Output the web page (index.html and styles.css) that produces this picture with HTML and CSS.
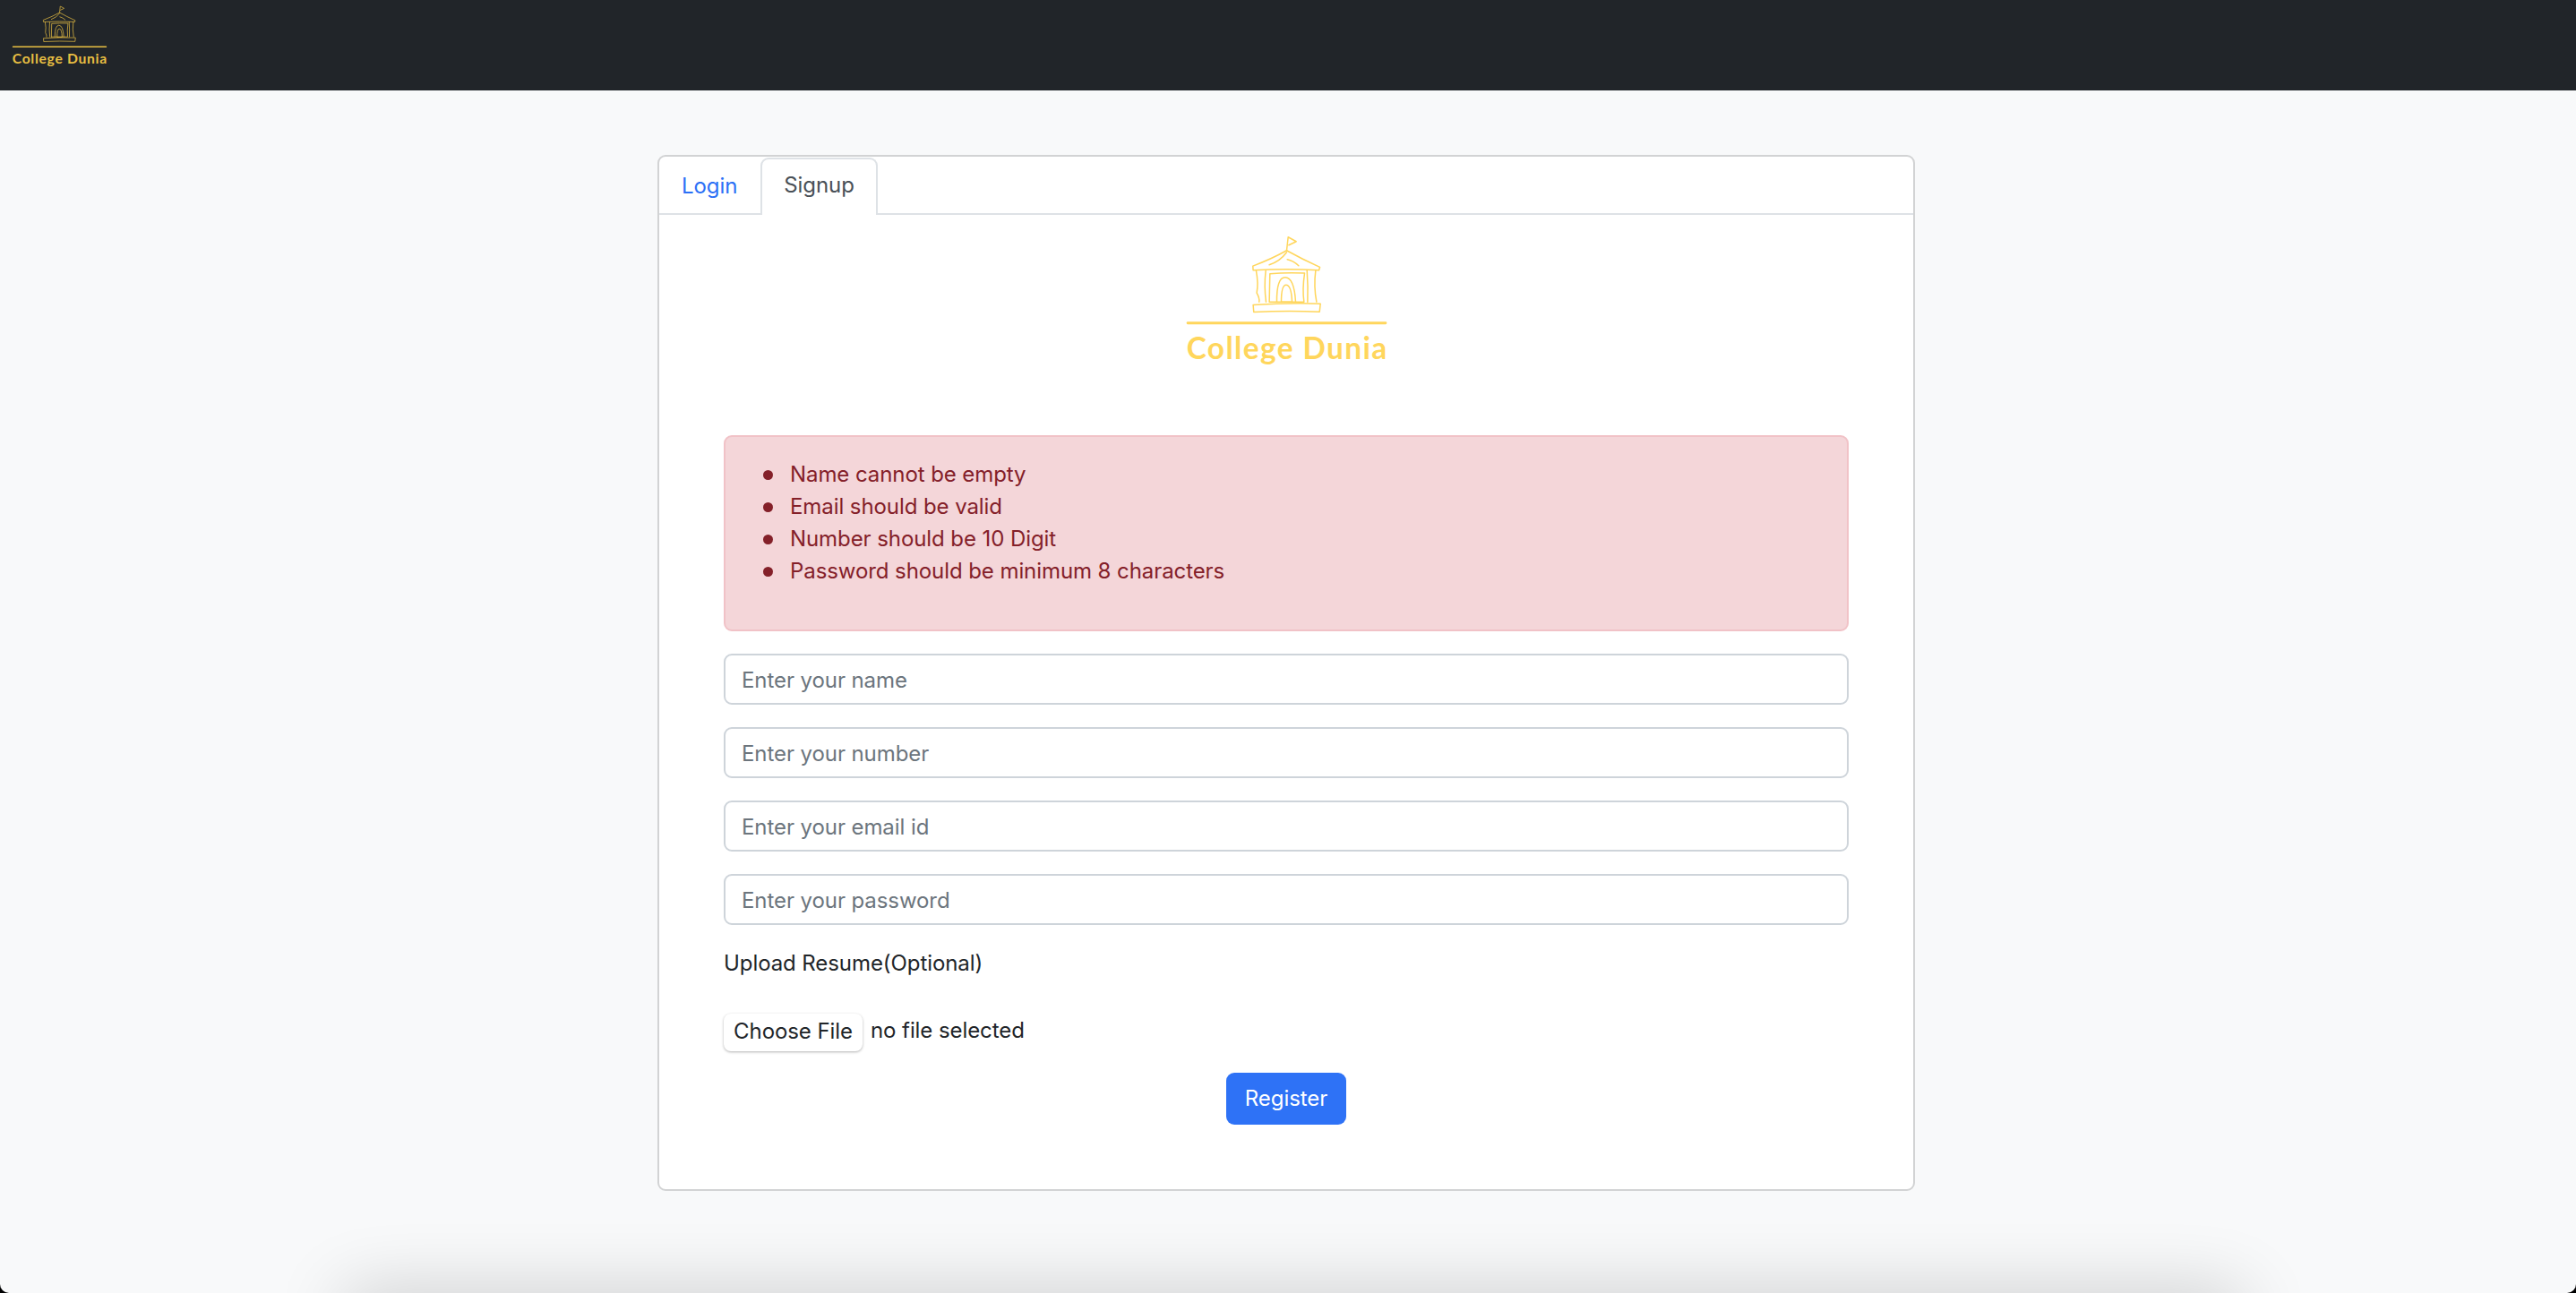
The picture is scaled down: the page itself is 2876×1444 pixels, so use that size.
FILE: index.html
```html
<!doctype html>
<html lang="en">
	<head>
		<meta charset="UTF-8" />
		<meta name="viewport" content="width=device-width, initial-scale=1.0" />
		<title>College Dunia</title>
		<link rel="stylesheet" href="styles.css">
	</head>
	<body>
		<svg class="logo-defs" width="0" height="0" aria-hidden="true">
			<symbol id="college-mark" viewBox="130 40 680 455">
				<g class="logo-strokes">
					<!-- flag -->
					<path d="M470 90 L475 45 L502 60 L477 72" />
					<!-- roof -->
					<path d="M357 142 Q420 118 470 90 Q520 118 581 146 L578 156 Q470 150 358 156 Z" />
					<path d="M470 96 Q448 126 412 138 M472 120 Q492 124 510 141" />
					<!-- columns -->
					<path d="M368 158 Q376 200 370 232 Q380 250 378 262 M400 158 Q394 210 401 262" />
					<path d="M538 156 Q542 210 540 262 M567 156 Q560 210 570 262" />
					<!-- door -->
					<path d="M412 262 L414 168 Q470 163 530 166 Q522 220 528 262 L412 262" />
					<path d="M437 262 Q436 180 465 180 Q495 180 500 262 M452 262 Q452 205 468 205 Q486 205 488 262 Z" />
					<!-- base -->
					<path d="M358 272 Q470 265 583 268 L580 295 Q470 290 360 296 Z" />
				</g>
				<rect x="135" y="328" width="670" height="9" rx="4" />
			</symbol>
		</svg>

		<div class="page">
			<nav class="navbar">
				<svg class="navbar-logo" viewBox="130 40 680 455">
					<use href="#college-mark" x="130" y="40" width="680" height="455" />
					<text class="logo-text" x="135" y="452" textLength="670">College Dunia</text>
				</svg>
			</nav>

			<main class="content">
				<div class="card">
					<ul class="tabs">
						<li><a class="tab tab-link" href="#">Login</a></li>
						<li><a class="tab tab-active" href="#">Signup</a></li>
					</ul>

					<div class="card-body">
						<svg class="card-logo" viewBox="130 40 680 455">
							<use href="#college-mark" x="130" y="40" width="680" height="455" />
							<text class="logo-text" x="135" y="452" textLength="670">College Dunia</text>
						</svg>

						<div class="alert">
							<ul>
								<li>Name cannot be empty</li>
								<li>Email should be valid</li>
								<li>Number should be 10 Digit</li>
								<li>Password should be minimum 8 characters</li>
							</ul>
						</div>

						<form class="signup-form">
							<input class="field" type="text" placeholder="Enter your name" />
							<input class="field" type="text" placeholder="Enter your number" />
							<input class="field" type="text" placeholder="Enter your email id" />
							<input class="field" type="password" placeholder="Enter your password" />

							<label class="upload-label">Upload Resume(Optional)</label>
							<div class="file-row">
								<button class="file-button" type="button">Choose File</button>
								<span class="file-name">no file selected</span>
							</div>

							<button class="submit-button" type="submit">Register</button>
						</form>
					</div>
				</div>
			</main>

			<div class="footer-shadow"></div>
		</div>
	</body>
</html>
```

FILE: styles.css
```css
html {
	background-color: #000;
}
body {
	margin: 0;
	font-family: Inter, "Noto Sans", sans-serif;
	font-size: 24px;
	line-height: 36px;
	letter-spacing: -0.08px;
	color: #212529;
}
.logo-defs {
	position: absolute;
}
.logo-strokes {
	fill: none;
	stroke: currentColor;
	stroke-width: 4.5;
	stroke-linejoin: round;
	stroke-linecap: round;
}
#college-mark rect {
	fill: currentColor;
}
.logo-text {
	fill: currentColor;
	font-family: Lato, sans-serif;
	font-size: 100px;
	font-weight: 700;
	letter-spacing: 0;
}
.page {
	display: flex;
	flex-direction: column;
	height: 100vh;
	overflow: hidden;
	background-color: #f8f9fa;
	border-radius: 0 0 10px 10px;
}
.navbar {
	flex: none;
	height: 101px;
	box-sizing: border-box;
	padding: 6px 13px;
	background-color: #212529;
}
.navbar-logo {
	display: block;
	width: 107px;
	height: 72px;
	color: #e8bf42;
}
.content {
	flex: none;
	height: 1343px;
	box-sizing: border-box;
	padding: 72px 4px 0 0;
	display: flex;
	justify-content: center;
	align-items: flex-start;
}
.card {
	width: 1404px;
	box-sizing: border-box;
	background-color: #fff;
	border: 2px solid #d2d3d4;
	border-radius: 9px;
}
.tabs {
	display: flex;
	gap: 4px;
	margin: 0;
	padding: 0;
	list-style: none;
	border-bottom: 2px solid #dee2e6;
}
.tabs li {
	margin-bottom: -2px;
}
.tab {
	display: block;
	height: 63px;
	box-sizing: border-box;
	padding: 12px 24px;
	border: 2px solid transparent;
	border-bottom: 0;
	border-radius: 9px 9px 0 0;
	text-decoration: none;
}
.tab-link {
	color: #2b70f6;
	margin-top: 1px;
	padding: 12px 20px 12px 23px;
}
.tab-active {
	color: #495057;
	background-color: #fff;
	border-color: #dee2e6;
	height: 64px;
	margin-top: 1px;
	padding-top: 11px;
}
.card-body {
	padding: 23px 72px 72px;
}
.card-logo {
	display: block;
	width: 227px;
	height: 152px;
	margin: 0 auto 71px;
	color: #ffd65c;
}
.alert {
	height: 219px;
	box-sizing: border-box;
	padding: 24px;
	background-color: #f4d6d9;
	border: 2px solid #f1c2c7;
	border-radius: 9px;
	color: #842029;
}
.alert ul {
	margin: 0;
	padding-left: 48px;
	list-style: none;
}
.alert li {
	display: flex;
	align-items: center;
}
.alert li::before {
	content: "";
	flex: none;
	width: 11px;
	height: 11px;
	margin: 0 19px 0 -30px;
	border-radius: 50%;
	background-color: #842029;
}
.signup-form {
	display: flex;
	flex-direction: column;
	margin-top: 25px;
}
.field {
	height: 57px;
	box-sizing: border-box;
	margin-bottom: 25px;
	padding: 2px 18px 0;
	font: inherit;
	letter-spacing: inherit;
	color: #212529;
	background-color: #fff;
	border: 2px solid #ced4da;
	border-radius: 9px;
}
.field::placeholder {
	color: #6c757d;
	opacity: 1;
}
.upload-label {
	margin-bottom: 38px;
}
.file-row {
	display: flex;
	align-items: center;
	gap: 9px;
	height: 42px;
	margin-bottom: 24px;
}
.file-button {
	width: 155px;
	height: 42px;
	padding: 0 0 2px;
	font: inherit;
	letter-spacing: inherit;
	color: #212529;
	background-color: #fff;
	border: 0;
	border-radius: 8px;
	box-shadow: 0 1px 3px rgba(0, 0, 0, 0.3);
}
.file-name {
	padding-bottom: 4px;
}
.submit-button {
	align-self: center;
	width: 134px;
	height: 58px;
	padding: 0;
	font: inherit;
	letter-spacing: inherit;
	color: #fff;
	background-color: #2e72f6;
	border: 0;
	border-radius: 9px;
}
.footer-shadow {
	flex: none;
	width: 2118px;
	height: 60px;
	margin-left: 385px;
	box-shadow: 0 0 80px rgba(0, 0, 0, 0.2);
}
```
